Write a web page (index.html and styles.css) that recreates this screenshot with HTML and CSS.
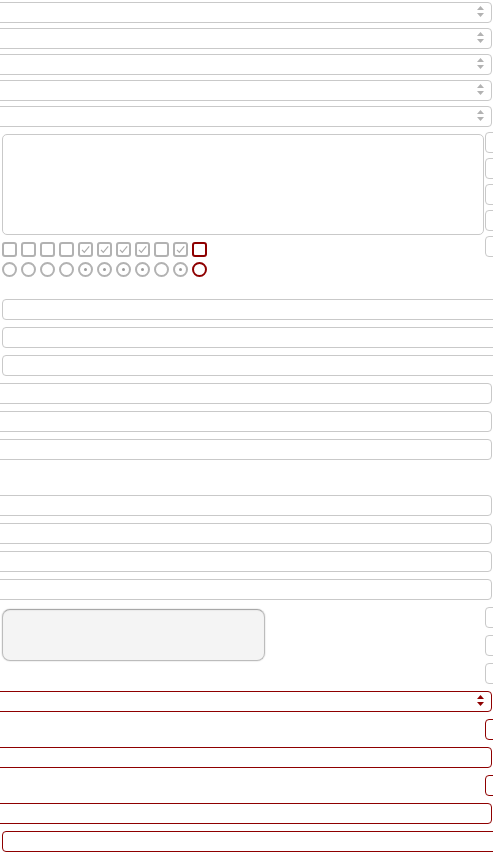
FILE: index.html
```html
<!DOCTYPE html>
<html>
<head>
<meta charset="utf-8">
<title>Form controls</title>
<link rel="stylesheet" href="styles.css">
</head>
<body>
<div class="page">
  <div class="sel-list">
    <div class="box full sel"><svg class="spin" viewBox="0 0 7 11" width="7" height="11"><polygon points="3.5,0 7,4 0,4"/><polygon points="0,7 7,7 3.5,11"/></svg></div>
    <div class="box full sel"><svg class="spin" viewBox="0 0 7 11" width="7" height="11"><polygon points="3.5,0 7,4 0,4"/><polygon points="0,7 7,7 3.5,11"/></svg></div>
    <div class="box full sel"><svg class="spin" viewBox="0 0 7 11" width="7" height="11"><polygon points="3.5,0 7,4 0,4"/><polygon points="0,7 7,7 3.5,11"/></svg></div>
    <div class="box full sel"><svg class="spin" viewBox="0 0 7 11" width="7" height="11"><polygon points="3.5,0 7,4 0,4"/><polygon points="0,7 7,7 3.5,11"/></svg></div>
    <div class="box full sel"><svg class="spin" viewBox="0 0 7 11" width="7" height="11"><polygon points="3.5,0 7,4 0,4"/><polygon points="0,7 7,7 3.5,11"/></svg></div>
  </div>

  <div class="mid">
    <div class="mid-left">
      <div class="textarea"></div>
      <div class="toggles">
        <span class="cb"></span><span class="cb"></span><span class="cb"></span><span class="cb"></span>
        <span class="cb on"><svg viewBox="0 0 11 11" width="11" height="11"><path d="M2 5.8 L4.3 8.3 L9.2 2.4"/></svg></span>
        <span class="cb on"><svg viewBox="0 0 11 11" width="11" height="11"><path d="M2 5.8 L4.3 8.3 L9.2 2.4"/></svg></span>
        <span class="cb on"><svg viewBox="0 0 11 11" width="11" height="11"><path d="M2 5.8 L4.3 8.3 L9.2 2.4"/></svg></span>
        <span class="cb on"><svg viewBox="0 0 11 11" width="11" height="11"><path d="M2 5.8 L4.3 8.3 L9.2 2.4"/></svg></span>
        <span class="cb"></span>
        <span class="cb on"><svg viewBox="0 0 11 11" width="11" height="11"><path d="M2 5.8 L4.3 8.3 L9.2 2.4"/></svg></span>
        <span class="cb bad"></span>
      </div>
      <div class="toggles radios">
        <span class="rb"></span><span class="rb"></span><span class="rb"></span><span class="rb"></span>
        <span class="rb on"><i class="dot"></i></span>
        <span class="rb on"><i class="dot"></i></span>
        <span class="rb on"><i class="dot"></i></span>
        <span class="rb on"><i class="dot"></i></span>
        <span class="rb"></span>
        <span class="rb on"><i class="dot"></i></span>
        <span class="rb bad"></span>
      </div>
    </div>
    <div class="mid-right">
      <div class="box small"></div>
      <div class="box small"></div>
      <div class="box small"></div>
      <div class="box small"></div>
      <div class="box small"></div>
    </div>
  </div>

  <div class="stack">
    <div class="box right"></div>
    <div class="box right"></div>
    <div class="box right"></div>
    <div class="box full"></div>
    <div class="box full"></div>
    <div class="box full"></div>
    <div class="spacer"></div>
    <div class="box full"></div>
    <div class="box full"></div>
    <div class="box full"></div>
    <div class="box full"></div>
    <div class="btn-row">
      <div class="button"></div>
      <div class="small-col">
        <div class="box small"></div>
        <div class="box small"></div>
        <div class="box small"></div>
      </div>
    </div>
    <div class="box full sel red"><svg class="spin" viewBox="0 0 7 11" width="7" height="11"><polygon points="3.5,0 7,4 0,4"/><polygon points="0,7 7,7 3.5,11"/></svg></div>
    <div class="box small red"></div>
    <div class="box full red"></div>
    <div class="box small red"></div>
    <div class="box full red"></div>
    <div class="box right red"></div>
  </div>
</div>
</body>
</html>
```

FILE: styles.css
```css
html, body {
  margin: 0;
  padding: 0;
  background: #ffffff;
  overflow: hidden;
  font-family: "Liberation Sans", Arial, sans-serif;
}

.page {
  width: 493px;
  height: 860px;
  overflow: hidden;
  display: flex;
  flex-direction: column;
}

.box {
  box-sizing: border-box;
  height: 21px;
  border: 1px solid #c9c9c9;
  border-radius: 4px;
  background: #ffffff;
  flex-shrink: 0;
}

.box.full {
  margin-left: -12px;
  margin-right: 1px;
}

.box.right {
  margin-left: 2px;
  margin-right: -20px;
}

.box.small {
  margin-left: 485px;
  width: 24px;
}

.box.red {
  border-color: #8e0000;
}

.sel {
  display: flex;
  justify-content: flex-end;
  align-items: flex-start;
  padding-top: 3px;
  padding-right: 7px;
}

.spin {
  display: block;
  fill: #b2b2b2;
}

.sel.red .spin {
  fill: #8e0000;
}

.sel-list {
  display: flex;
  flex-direction: column;
  gap: 5px;
  padding-top: 2px;
}

.mid {
  display: flex;
  margin-top: 5px;
}

.mid-left {
  margin-left: 2px;
  width: 482px;
  padding-top: 2px;
  display: flex;
  flex-direction: column;
  flex-shrink: 0;
}

.textarea {
  box-sizing: border-box;
  height: 101px;
  border: 1px solid #c9c9c9;
  border-radius: 5px;
}

.toggles {
  display: flex;
  gap: 4px;
  margin-top: 7px;
}

.toggles.radios {
  margin-top: 5px;
}

.cb, .rb {
  box-sizing: border-box;
  width: 15px;
  height: 15px;
  border: 2px solid #b2b2b2;
  border-radius: 3px;
  display: flex;
  align-items: center;
  justify-content: center;
  flex-shrink: 0;
}

.rb {
  border-radius: 50%;
}

.cb.bad, .rb.bad {
  border-color: #8e0000;
}

.cb svg {
  display: block;
  fill: none;
  stroke: #aaaaaa;
  stroke-width: 1.2;
}

.dot {
  display: block;
  width: 3px;
  height: 3px;
  border-radius: 50%;
  background: #9a9a9a;
}

.mid-right {
  margin-left: 1px;
  display: flex;
  flex-direction: column;
  gap: 5px;
  flex-shrink: 0;
}

.mid-right .box.small,
.small-col .box.small {
  margin-left: 0;
}

.stack {
  display: flex;
  flex-direction: column;
  gap: 7px;
  margin-top: 22px;
}

.spacer {
  height: 21px;
  flex-shrink: 0;
}

.btn-row {
  display: flex;
  flex-shrink: 0;
}

.button {
  box-sizing: border-box;
  flex-shrink: 0;
  margin-left: 2px;
  margin-top: 2px;
  width: 263px;
  height: 52px;
  background: #f4f4f4;
  border: 1px solid #bcbcbc;
  border-top-color: #a8a8a8;
  border-radius: 8px;
  box-shadow: 0 0 1px 1px rgba(0, 0, 0, 0.06), inset 0 1px 1px rgba(0, 0, 0, 0.04);
}

.small-col {
  flex-shrink: 0;
  margin-left: 220px;
  display: flex;
  flex-direction: column;
  gap: 7px;
}
```
